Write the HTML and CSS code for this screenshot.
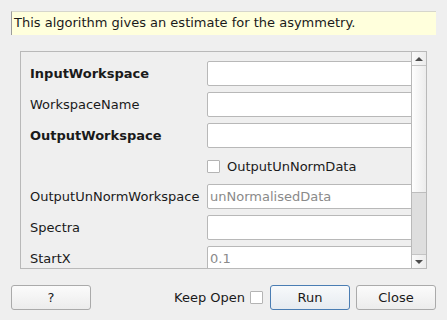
FILE: index.html
```html
<!DOCTYPE html>
<html>
<head>
<meta charset="utf-8">
<link rel="stylesheet" href="styles.css">
</head>
<body>
<div class="dialog">
  <div class="info">This algorithm gives an estimate for the asymmetry.</div>
  <div class="scrollarea">
    <div class="viewport">
      <div class="form">
        <div class="label bold">InputWorkspace</div>
        <div class="field"><div class="input"></div></div>
        <div class="label">WorkspaceName</div>
        <div class="field"><div class="input"></div></div>
        <div class="label bold">OutputWorkspace</div>
        <div class="field"><div class="input"></div></div>
        <div class="label"></div>
        <div class="field cbrow"><span class="checkbox"></span><span class="cblabel">OutputUnNormData</span></div>
        <div class="label">OutputUnNormWorkspace</div>
        <div class="field"><div class="input placeholder">unNormalisedData</div></div>
        <div class="label">Spectra</div>
        <div class="field"><div class="input"></div></div>
        <div class="label">StartX</div>
        <div class="field"><div class="input placeholder">0.1</div></div>
      </div>
    </div>
    <div class="scrollbar">
      <div class="sb-btn up"><span class="tri-up"></span></div>
      <div class="sb-handle"></div>
      <div class="sb-trough"></div>
      <div class="sb-btn down"><span class="tri-down"></span></div>
    </div>
  </div>
  <div class="buttons">
    <button class="btn">?</button>
    <div class="spacer"></div>
    <span class="keep">Keep Open</span>
    <span class="checkbox keepcb"></span>
    <button class="btn run">Run</button>
    <button class="btn close">Close</button>
  </div>
</div>
</body>
</html>
```
FILE: styles.css
```css
html, body {
  margin: 0;
  padding: 0;
  background: #efefef;
  font-family: "DejaVu Sans", sans-serif;
  font-size: 13px;
  color: #1a1a1a;
}
.dialog {
  width: 447px;
  height: 320px;
  box-sizing: border-box;
  padding: 11px 11px 0 11px;
  display: flex;
  flex-direction: column;
}
.info {
  height: 24px;
  box-sizing: border-box;
  background: #ffffdc;
  border-top: 1px solid #d6d6cc;
  border-left: 1px solid #9c9c9c;
  padding: 0 0 0 2px;
  line-height: 22px;
  white-space: nowrap;
}
.scrollarea {
  margin: 16px 9px 0 9px;
  height: 218px;
  box-sizing: border-box;
  border: 1px solid #b9b9b9;
  display: flex;
  overflow: hidden;
}
.viewport {
  flex: 1;
  overflow: hidden;
}
.form {
  display: grid;
  grid-template-columns: 177px 230px;
  grid-template-rows: 25px 25px 25px 24px 25px 25px 25px;
  row-gap: 6px;
  padding: 9px 0 0 9px;
}
.label {
  display: flex;
  align-items: center;
  white-space: nowrap;
}
.bold { font-weight: bold; }
.field {
  display: flex;
  align-items: stretch;
}
.input {
  flex: 1;
  background: #fff;
  border: 1px solid #b8b8b8;
  border-radius: 2px;
  box-sizing: border-box;
  padding-left: 2px;
  display: flex;
  align-items: center;
}
.placeholder { color: #8a8a8a; }
.cbrow { align-items: center; }
.checkbox {
  display: inline-block;
  width: 13px;
  height: 13px;
  box-sizing: border-box;
  background: #fff;
  border: 1px solid #b4b4b4;
  border-radius: 1px;
}
.cblabel { margin-left: 7px; }
.scrollbar {
  width: 14px;
  border-left: 1px solid #b9b9b9;
  display: flex;
  flex-direction: column;
  background: #dedede;
}
.sb-btn {
  height: 13px;
  background: linear-gradient(to right, #fafafa, #ececec);
  display: flex;
  align-items: center;
  justify-content: center;
}
.sb-btn.up { border-bottom: 1px solid #c4c4c4; }
.sb-btn.down { border-top: 1px solid #c4c4c4; margin-top: auto; }
.sb-handle {
  height: 126px;
  background: linear-gradient(to right, #fefefe, #ececec);
  border-bottom: 1px solid #bdbdbd;
}
.sb-trough { flex: 1; }
.tri-up {
  width: 0; height: 0;
  border-left: 4px solid transparent;
  border-right: 4px solid transparent;
  border-bottom: 4px solid #4c4c4c;
}
.tri-down {
  width: 0; height: 0;
  border-left: 4px solid transparent;
  border-right: 4px solid transparent;
  border-top: 4px solid #4c4c4c;
}
.buttons {
  margin-top: 16px;
  display: flex;
  align-items: center;
  height: 25px;
}
.spacer { flex: 1; }
.btn {
  width: 80px;
  height: 25px;
  box-sizing: border-box;
  font-family: "DejaVu Sans", sans-serif;
  font-size: 13px;
  color: #1a1a1a;
  border: 1px solid #aaaaaa;
  border-radius: 3px;
  background: linear-gradient(to bottom, #fbfbfb, #ececec);
  padding: 0;
}
.keep { margin-right: 5px; }
.keepcb { margin-right: 7px; }
.run {
  border-color: #4a7db3;
  background: linear-gradient(to bottom, #f7f9fb, #e6ebf0);
  margin-right: 6px;
}
```
